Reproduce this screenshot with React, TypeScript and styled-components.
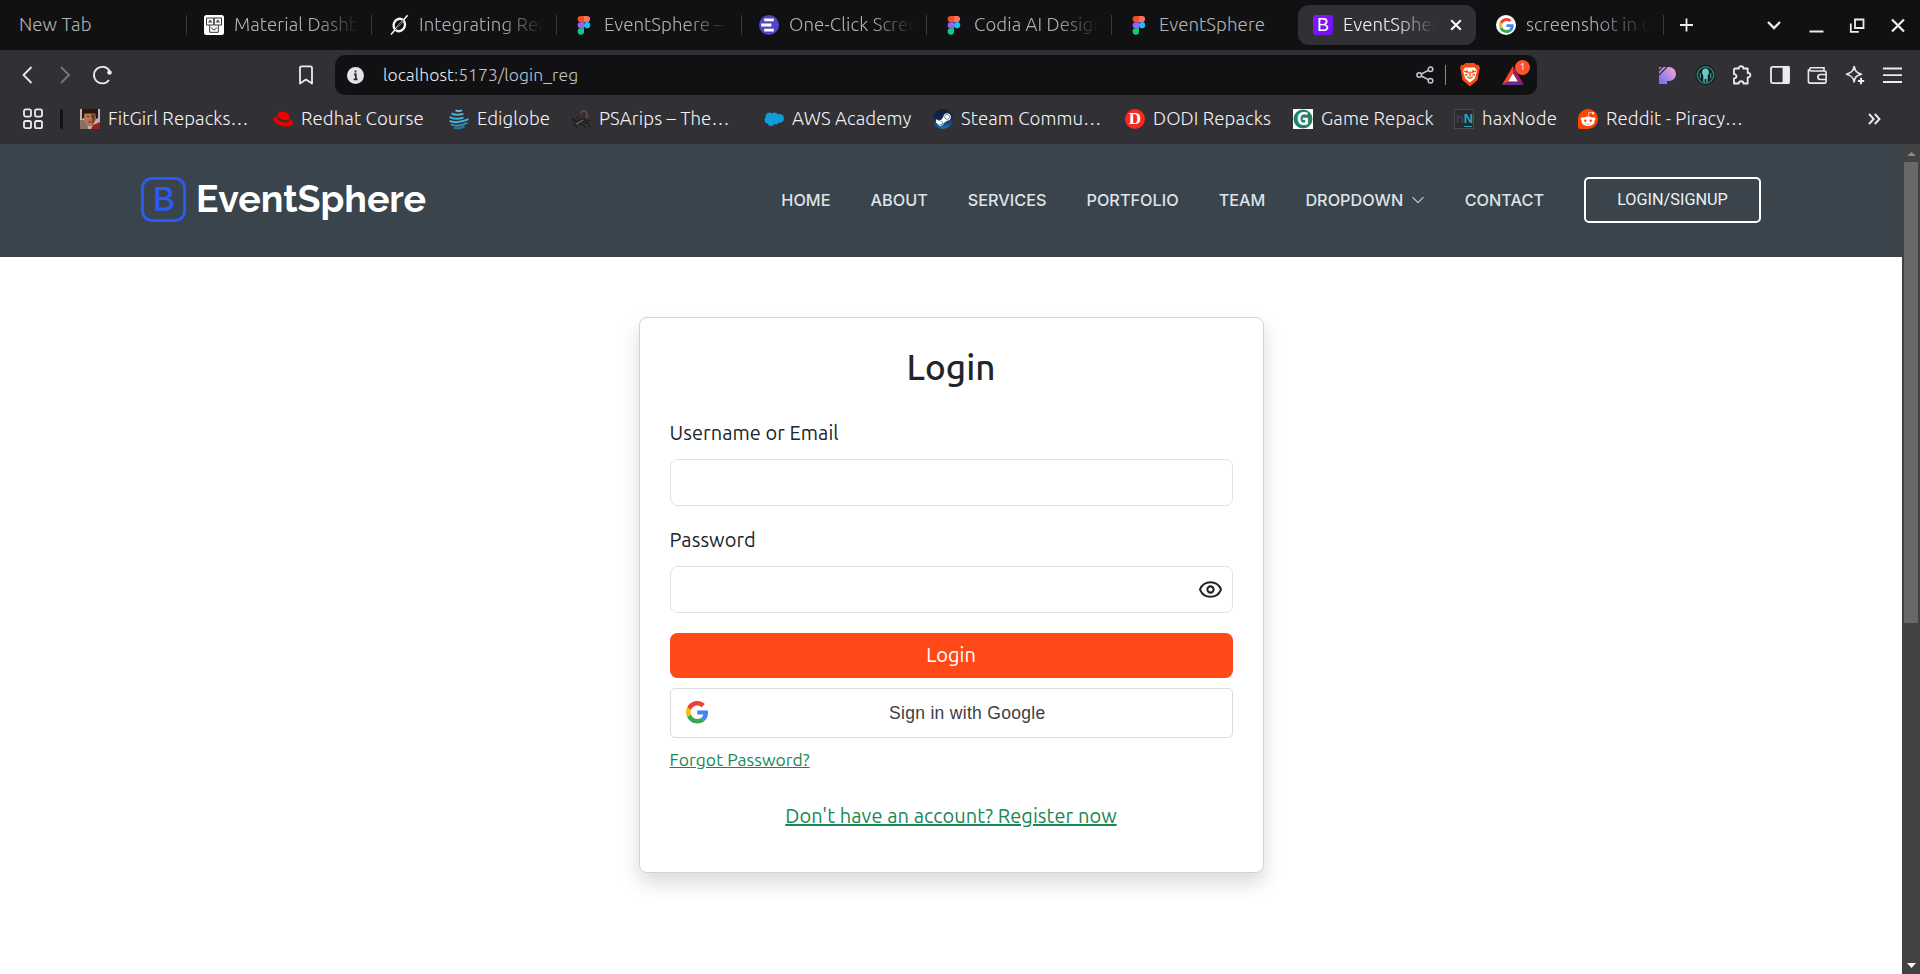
import React from 'react';
import styled, { createGlobalStyle, css } from 'styled-components';
import { Eye } from 'lucide-react';
import { FaRedhat, FaSteamSymbol, FaRedditAlien } from 'react-icons/fa';
import { BsBootstrap, BsChevronDown } from 'react-icons/bs';

const uiFont = "Ubuntu, 'Open Sans', 'Noto Sans', sans-serif";

const GlobalStyle = createGlobalStyle`
  *, *::before, *::after { box-sizing: border-box; }
  body { margin: 0; background: #fff; font-family: ${uiFont}; overflow: hidden; }
  svg { display: block; flex: none; }
`;

const Window = styled.div`
  display: flex;
  flex-direction: column;
  width: 1920px;
  height: 974px;
  overflow: hidden;
`;

/* ---------- browser chrome ---------- */

const TabStrip = styled.div`
  display: flex;
  align-items: center;
  height: 50px;
  flex: none;
  background: #111113;
  color: #f2f2f4;
`;

const Tab = styled.div<{ $width?: number; $active?: boolean; $plain?: boolean; $last?: boolean }>`
  display: flex;
  align-items: center;
  height: 20px;
  width: ${p => p.$width ?? 185}px;
  flex: none;
  padding-left: ${p => (p.$plain ? 19 : 17)}px;
  gap: 10px;
  color: #b3b3b6;
  border-right: 1px solid ${p => (p.$last ? 'transparent' : '#3b3b3e')};
  ${p => p.$active && css`
    height: 40px;
    width: 178px;
    margin: 0 3px 0 1px;
    padding-left: 15px;
    border: 0;
    border-radius: 11px;
    background: #313034;
    color: #f2f2f4;
  `}
`;

const TabTitle = styled.span<{ $short?: boolean }>`
  width: ${p => (p.$short ? 93 : 125)}px;
  overflow: hidden;
  white-space: nowrap;
  font-size: 18.67px;
  font-weight: 350;
  line-height: 26px;
  letter-spacing: 0.08px;
  mask-image: linear-gradient(to right, #000 ${p => (p.$short ? 55 : 66)}%, transparent 100%);
`;

const TabClose = styled.svg`
  margin-left: 4px;
`;

const LastTabTitle = styled(TabTitle)`
  mask-image: linear-gradient(to right, #000 55%, transparent 100%);
`;

const WholeTitle = styled(TabTitle)`
  mask-image: none;
`;

const WindowControls = styled.div`
  display: flex;
  align-items: center;
  margin-left: auto;
  padding-right: 12px;
  gap: 20px;
`;

const NewTabButton = styled.svg`
  margin-left: 12px;
`;

const Toolbar = styled.div`
  display: flex;
  align-items: center;
  height: 50px;
  flex: none;
  background: #313034;
  padding: 0 17px 0 20px;
`;

const NavIcons = styled.div`
  display: flex;
  align-items: center;
  width: 315px;
`;

const NavGap = styled.div`
  flex: 1;
`;

const AddressBar = styled.div`
  display: flex;
  align-items: center;
  width: 1202px;
  height: 40px;
  flex: none;
  padding: 0 10px 0 12px;
  border-radius: 10px;
  background: #111113;
`;

const Url = styled.span`
  margin: -2px 0 0 19px;
  font-size: 17.5px;
  font-weight: 350;
  letter-spacing: 0.08px;
  color: #c3c6cb;
  b { font-weight: 350; color: #e6e8ec; }
`;

const AddressActions = styled.div`
  display: flex;
  align-items: center;
  margin-left: auto;
`;

const AddressDivider = styled.div`
  width: 1px;
  height: 20px;
  margin: 0 14px 0 11px;
  background: #8a8a8e;
`;

const Rewards = styled.div`
  position: relative;
  margin-left: 21px;
  width: 26px;
  height: 22px;
`;

const RewardsBadge = styled.span`
  position: absolute;
  left: 14px;
  top: -4px;
  width: 15px;
  height: 15px;
  border-radius: 7.5px;
  background: #fb542b;
  color: #fff;
  font-size: 9px;
  line-height: 15px;
  text-align: center;
`;

const Extensions = styled.div`
  display: flex;
  align-items: center;
  margin-left: auto;
  gap: 15.3px;
`;

const BookmarksBar = styled.div`
  display: flex;
  align-items: center;
  height: 44px;
  flex: none;
  padding: 0 39px 6px 23px;
  background: #313034;
  color: #f2f2f4;
`;

const BarDivider = styled.div`
  width: 3px;
  height: 20px;
  margin: 0 17px;
  border-radius: 2px;
  background: #121214;
`;

const Bookmark = styled.div<{ $width: number }>`
  display: flex;
  align-items: center;
  gap: 8px;
  width: ${p => p.$width}px;
  flex: none;
  font-size: 18.67px;
  font-weight: 350;
  line-height: 26px;
  letter-spacing: 0.08px;
  white-space: nowrap;
`;

const MoreBookmarks = styled.svg`
  margin-left: auto;
`;

/* ---------- favicons ---------- */

const GoogleG = ({ size }: { size: number }) => (
  <svg width={size} height={size} viewBox="0 0 48 48">
    <path fill="#ea4335" d="M24 9.5c3.54 0 6.71 1.22 9.21 3.6l6.85-6.85C35.9 2.38 30.47 0 24 0 14.62 0 6.51 5.38 2.56 13.22l7.98 6.19C12.43 13.72 17.74 9.5 24 9.5z" />
    <path fill="#4285f4" d="M46.98 24.55c0-1.57-.15-3.09-.38-4.55H24v9.02h12.94c-.58 2.96-2.26 5.48-4.78 7.18l7.73 6c4.51-4.18 7.09-10.36 7.09-17.65z" />
    <path fill="#fbbc05" d="M10.53 28.59c-.48-1.45-.76-2.99-.76-4.59s.27-3.14.76-4.59l-7.98-6.19C.92 16.46 0 20.12 0 24c0 3.88.92 7.54 2.56 10.78l7.97-6.19z" />
    <path fill="#34a853" d="M24 48c6.48 0 11.93-2.13 15.89-5.81l-7.73-6c-2.15 1.45-4.92 2.3-8.16 2.3-6.26 0-11.57-4.22-13.47-9.91l-7.98 6.19C6.51 42.62 14.62 48 24 48z" />
  </svg>
);

const FigmaIcon = () => (
  <svg width="20" height="20" viewBox="0 0 20 20">
    <path d="M6.7 1H10v6.2H6.7a3.1 3.1 0 0 1 0-6.2z" fill="#f24e1e" />
    <path d="M10 1h3a3.1 3.1 0 0 1 0 6.2h-3z" fill="#ff7262" />
    <path d="M6.7 7.2H10v6.1H6.7a3.05 3.05 0 0 1 0-6.1z" fill="#a259ff" />
    <circle cx="13.1" cy="10.2" r="3.1" fill="#1abcfe" />
    <path d="M6.7 13.3H10v3.2a3.2 3.2 0 1 1-3.3-3.2z" fill="#0acf83" />
  </svg>
);

const MaterialIcon = () => (
  <svg width="20" height="20" viewBox="0 0 20 20" fill="none" stroke="#333" strokeWidth="1">
    <rect width="20" height="20" rx="2.5" fill="#fff" stroke="none" />
    <path d="M2.5 3h7.3v7H2.5zM10.2 3h7.3v7h-7.3zM5.7 10v7.3h8.6V10M7.8 12.5v1l2.2 1.5 2.2-1.5v-1" />
    <path d="M4.6 7.5 6.2 5l1.6 2.5M12.2 7.5 13.8 5l1.6 2.5M5.2 7h2M12.8 7h2" />
  </svg>
);

const SlashedOIcon = () => (
  <svg width="20" height="22" viewBox="0 0 20 22" fill="none" stroke="#f4f4f4">
    <ellipse cx="10.3" cy="11" rx="5.6" ry="6.3" strokeWidth="2.4" transform="rotate(24 10.3 11)" />
    <path d="M2 20.5 18.6 1.2" strokeWidth="1.5" />
    <path d="M6.5 15.8 14.2 6.2" strokeWidth="1" stroke="#111113" />
  </svg>
);

const StackIcon = () => (
  <svg width="20" height="20" viewBox="0 0 20 20">
    <circle cx="10" cy="10" r="10" fill="#5245c4" />
    <path d="M5.2 3.5h9.6v2.8H5.2zM2.2 8.6h10.2v2.8H2.2zM5.2 13.8h9.6v2.8H5.2z" fill="#fff" />
  </svg>
);

const BootstrapBadge = styled.span`
  width: 20px;
  height: 20px;
  flex: none;
  border-radius: 3px;
  background: linear-gradient(135deg, #8d17fb, #6a11f5);
  color: #fff;
  font: 500 18px/20px 'Liberation Sans', sans-serif;
  text-align: center;
`;

const RoundGoogle = styled.span`
  display: flex;
  align-items: center;
  justify-content: center;
  width: 20px;
  height: 20px;
  flex: none;
  border-radius: 50%;
  background: #fff;
`;

const PortraitIcon = () => (
  <svg width="20" height="20" viewBox="0 0 20 20">
    <rect width="20" height="20" fill="#b9b4b8" />
    <path d="M2 0h16v9l-2 1-1-5H5L4 9 2 10z" fill="#2b150f" />
    <path d="M4.5 4.5h10.7l.3 6-3 6.5H7.5L4 11z" fill="#b9764e" />
    <path d="M11 5h4.5v6l-3 5z" fill="#7c4429" />
    <path d="M7 7.5h2M11.5 7.5h2M8.5 13h3" stroke="#4b2317" />
    <path d="M0 11h4l4 7v2H0z" fill="#8b705f" />
    <path d="M13 16l7-3v7h-9z" fill="#a11d1d" />
  </svg>
);

const GlobeWavesIcon = () => (
  <svg width="20" height="22" viewBox="0 0 20 22" fill="none" stroke="#46b4d8" strokeWidth="2">
    <path d="M6.5 2.2c2 1.4 4 1 6.5.2" stroke="#65cbe8" strokeWidth="1.7" />
    <path d="M2.6 5.3c4 2.5 7.4 1.6 11.8.6" />
    <path d="M.6 9c5 2.9 9 2.2 14 .6" />
    <path d="M.6 12.8c6 2.7 12 1.6 19-1.6" />
    <path d="M1.8 16.4c5 2 11 1.4 16.6-1.5" stroke="#318fbf" />
    <path d="M5 19.8c3.6 1 7.5.5 10.5-1.4" stroke="#28749f" />
  </svg>
);

const ScorpionIcon = () => (
  <svg width="20" height="22" viewBox="0 0 20 22" fill="none" stroke="#1d1d1e" strokeLinecap="round">
    <path d="M11 12.5c4-1 6-4 4.6-7.5C14.5 2.3 10.5 2 10 4.7" stroke="#555" strokeWidth="1.6" />
    <path d="M10 4.7l.8 1.6M15.9 8l1.6.5" stroke="#7a3434" strokeWidth="1.3" />
    <path d="M4 16.5 13 11.5" strokeWidth="3.6" />
    <path d="M5 13 1.5 11l-.5 2.5M9 11 6 9M12 14l5 1 2 4M9 16l4 1.5 2 3M5 17.5l1 3M15 12l4 .5" strokeWidth="1.2" />
    <path d="M5 16.3 12 12.2" stroke="#666" strokeWidth="1.4" />
  </svg>
);

const CloudIcon = () => (
  <svg width="20" height="20" viewBox="0 0 20 20">
    <path d="M8.3 4.6a3.6 3.6 0 0 1 5.6.8 4.4 4.4 0 0 1 6.1 4 4.4 4.4 0 0 1-5.3 4.3 3.2 3.2 0 0 1-4.2 1.3 3.7 3.7 0 0 1-6.8-.3A3.5 3.5 0 0 1 1.7 8.6 4 4 0 0 1 8.3 4.6z" fill="#0d9ddb" />
  </svg>
);

const SteamBadge = styled.span`
  display: flex;
  align-items: center;
  justify-content: center;
  width: 20px;
  height: 20px;
  flex: none;
  border-radius: 50%;
  background: linear-gradient(#101b3d, #11254f 45%, #1b7ab4);
  color: #fff;
`;

const LetterBadge = styled.span<{ $bg: string; $round?: boolean }>`
  width: 20px;
  height: 20px;
  flex: none;
  border-radius: ${p => (p.$round ? '50%' : '0')};
  background: ${p => p.$bg};
  color: #fff;
  font: 700 17px/20px ${p => (p.$round ? "'Liberation Serif', serif" : "'Open Sans', sans-serif")};
  text-align: center;
`;

const HaxBadge = styled.span`
  display: flex;
  justify-content: center;
  gap: 1px;
  width: 20px;
  height: 20px;
  flex: none;
  border: 1px solid #47494c;
  background: #2a2a2d;
  color: #3e4043;
  font: 700 13px/17px 'Liberation Sans Narrow', 'Liberation Sans', sans-serif;
  letter-spacing: -1px;
  b { color: #25a9bd; border-bottom: 1px solid #25a9bd; height: 17px; }
`;

const RedditBadge = styled.span`
  display: flex;
  align-items: center;
  justify-content: center;
  width: 20px;
  height: 20px;
  flex: none;
  border-radius: 50% 50% 50% 2px;
  background: #ff4500;
  color: #fff;
`;

/* ---------- site ---------- */

const Viewport = styled.div`
  display: flex;
  flex: 1;
  min-height: 0;
`;

const Site = styled.div`
  flex: 1;
  background: #fff;
`;

const Header = styled.header`
  display: flex;
  align-items: center;
  justify-content: space-between;
  height: 113px;
  padding: 0 141px 2px;
  background: #3a444c;
`;

const Brand = styled.div`
  display: flex;
  align-items: center;
  gap: 10px;
  color: #2a5bf8;
`;

const BrandName = styled.h1`
  margin: 0;
  font: 700 37.5px/45px Raleway, Lato, sans-serif;
  color: #fff;
`;

const NavMenu = styled.nav`
  display: flex;
  align-items: center;
  gap: 40px;
  font: 500 16.25px/24px Inter, sans-serif;
  color: #dfe3e7;
`;

const NavLink = styled.span`
  display: flex;
  align-items: center;
  gap: 7.5px;
`;

const SignupButton = styled.button`
  width: 177px;
  height: 46px;
  padding: 0;
  border: 2px solid #fff;
  border-radius: 5px;
  background: none;
  color: #f0f1f2;
  font: 400 16.25px/24px Roboto, sans-serif;
`;

const Card = styled.section`
  display: flex;
  flex-direction: column;
  width: 625px;
  height: 556px;
  margin: 60px auto 0;
  padding: 28px 30px 29px;
  border: 1px solid #d0d3d5;
  border-radius: 8px;
  background: #fff;
  box-shadow: 0 10px 20px rgba(0, 0, 0, 0.15);
  color: #212529;
`;

const Title = styled.h2`
  margin: 0;
  font-size: 35px;
  font-weight: 490;
  line-height: 42px;
  letter-spacing: 0.05px;
  text-align: center;
`;

const Fields = styled.div`
  margin: 30px 0 1px;
`;

const Field = styled.label`
  display: flex;
  flex-direction: column;
  gap: 11px;
  height: 88px;
  margin-bottom: 19px;
  font-size: 20px;
  font-weight: 370;
  line-height: 30px;
  letter-spacing: 0.05px;
`;

const InputBox = styled.span`
  display: flex;
  align-items: center;
  justify-content: flex-end;
  height: 47px;
  padding-right: 9px;
  border: 1px solid #dee2e6;
  border-radius: 7.5px;
`;

const LoginButton = styled.button`
  height: 45px;
  flex: none;
  padding: 0 0 2px;
  border: 0;
  border-radius: 7.5px;
  background: #ff4a17;
  color: #fff;
  font: 370 20px/30px ${uiFont};
`;

const GoogleButton = styled.button`
  display: flex;
  align-items: center;
  height: 50px;
  flex: none;
  margin-top: 10px;
  padding: 0 14px 1px 15px;
  border: 1px solid #dadce0;
  border-radius: 5px;
  background: #fff;
  color: #3c4043;
  font: 400 17.5px/20px 'Liberation Sans', Arial, sans-serif;
  letter-spacing: 0.3px;
  span { flex: 1; padding-left: 9px; text-align: center; }
`;

const ForgotLink = styled.a`
  align-self: flex-start;
  margin-top: 9px;
  font-size: 17.5px;
  font-weight: 370;
  line-height: 26px;
  letter-spacing: 0.06px;
  color: #198754;
  text-decoration: underline;
`;

const RegisterLink = styled.a`
  align-self: center;
  margin-top: 28px;
  font-size: 20px;
  font-weight: 370;
  line-height: 30px;
  letter-spacing: 0.07px;
  color: #198754;
  text-decoration: underline;
  text-decoration-thickness: 2px;
`;

const ScrollTrack = styled.div`
  display: flex;
  flex-direction: column;
  align-items: center;
  width: 18px;
  padding: 8px 0 6px;
  background: #424242;
`;

const ScrollThumb = styled.div`
  width: 14px;
  height: 461px;
  margin: 6px 0 auto;
  background: #686868;
`;

const tabs = [
  { title: 'Material Dashb', icon: <MaterialIcon /> },
  { title: 'Integrating Rea', icon: <SlashedOIcon /> },
  { title: 'EventSphere –', icon: <FigmaIcon /> },
  { title: 'One-Click Scree', icon: <StackIcon /> },
  { title: 'Codia AI Design', icon: <FigmaIcon /> },
];

const bookmarks = [
  { title: 'FitGirl Repacks…', width: 193, icon: <PortraitIcon /> },
  { title: 'Redhat Course', width: 176, icon: <FaRedhat size={20} color="#ee0000" /> },
  { title: 'Ediglobe', width: 122, icon: <GlobeWavesIcon /> },
  { title: 'PSArips – The…', width: 193, icon: <ScorpionIcon /> },
  { title: 'AWS Academy', width: 169, icon: <CloudIcon /> },
  { title: 'Steam Commu…', width: 192, icon: <SteamBadge><FaSteamSymbol size={17} /></SteamBadge> },
  { title: 'DODI Repacks', width: 168, icon: <LetterBadge $bg="#f9291f" $round>D</LetterBadge> },
  {
    title: 'Game Repack', width: 161,
    icon: <LetterBadge $bg="radial-gradient(circle, #238069 9px, #fff 9.8px)">G</LetterBadge>,
  },
  { title: 'haxNode', width: 124, icon: <HaxBadge>h<b>N</b></HaxBadge> },
  { title: 'Reddit - Piracy…', width: 170, icon: <RedditBadge><FaRedditAlien size={16} /></RedditBadge> },
];

const line = { fill: 'none', stroke: '#ececef', strokeWidth: 1.8 } as const;

export default function App() {
  return (
    <Window>
      <GlobalStyle />
      <TabStrip>
        <Tab $width={187} $plain>
          <WholeTitle>New Tab</WholeTitle>
        </Tab>
        {tabs.map(t => (
          <Tab key={t.title}>
            {t.icon}
            <TabTitle>{t.title}</TabTitle>
          </Tab>
        ))}
        <Tab $last>
          <FigmaIcon />
          <WholeTitle>EventSphere</WholeTitle>
        </Tab>
        <Tab $active>
          <BootstrapBadge>B</BootstrapBadge>
          <TabTitle $short>EventSphere</TabTitle>
          <TabClose width="12" height="12" viewBox="0 0 12 12" stroke="#fff" strokeWidth="2">
            <path d="M1.2 1.2l9.6 9.6M10.8 1.2l-9.6 9.6" />
          </TabClose>
        </Tab>
        <Tab>
          <RoundGoogle><GoogleG size={15} /></RoundGoogle>
          <LastTabTitle>screenshot in u</LastTabTitle>
        </Tab>
        <NewTabButton width="20" height="20" viewBox="0 0 20 20" {...line}>
          <path d="M10.5 3.5v13M4 10h13" />
        </NewTabButton>
        <WindowControls>
          <svg width="20" height="20" viewBox="0 0 20 20" {...line} strokeWidth="2.4">
            <path d="M4 7l6 6 6-6" />
          </svg>
          <svg width="24" height="20" viewBox="0 0 24 20" {...line} strokeWidth="2">
            <path d="M5.5 16.5h14" />
          </svg>
          <svg width="20" height="20" viewBox="0 0 20 20" {...line}>
            <path d="M7 4.5h8.5V13H7zM2.8 8.5v8.3h8" />
          </svg>
          <svg width="20" height="20" viewBox="0 0 20 20" {...line} strokeWidth="2.2">
            <path d="M4 4.5l12 12M16 4.5l-12 12" />
          </svg>
        </WindowControls>
      </TabStrip>

      <Toolbar>
        <NavIcons>
          <svg width="14" height="18" viewBox="0 0 14 18" {...line}>
            <path d="M11.5 1 3.5 9l8 8" />
          </svg>
          <svg width="42" height="18" viewBox="0 0 42 18" {...line} stroke="#77767b">
            <path d="M27 1l8 8-8 8" />
          </svg>
          <svg width="40" height="20" viewBox="0 0 40 20" {...line}>
            <path d="M33.5 6A8.3 8.3 0 1 0 33 15" />
            <circle cx="33.5" cy="7.5" r="2.3" fill="#ececef" stroke="none" />
          </svg>
          <NavGap />
          <svg width="36" height="20" viewBox="0 0 36 20" {...line} strokeLinejoin="round">
            <path d="M1 3a1.7 1.7 0 0 1 1.7-1.7h8.6A1.7 1.7 0 0 1 13 3v15.5l-6-4-6 4z" />
          </svg>
        </NavIcons>
        <AddressBar>
          <svg width="17" height="17" viewBox="0 0 17 17">
            <circle cx="8.5" cy="8.5" r="8.5" fill="#e3e3e8" />
            <path d="M7 7.3h1.8v5M6.6 12.4h4M8.5 3.5v2" stroke="#29292c" strokeWidth="1.7" fill="none" />
          </svg>
          <Url><b>localhost</b>:5173/login_reg</Url>
          <AddressActions>
            <svg width="18" height="18" viewBox="0 0 18 18" {...line} strokeWidth="1.5" stroke="#c8c8cc">
              <circle cx="3.2" cy="9" r="2.3" />
              <circle cx="14.5" cy="3.3" r="2.3" />
              <circle cx="14.5" cy="14.7" r="2.3" />
              <path d="M5.3 8l7-3.7M5.3 10l7 3.7" />
            </svg>
            <AddressDivider />
            <svg width="20" height="24" viewBox="0 0 20 24">
              <path d="M5.5 0h9l2 2 2-.2L20 5l-.8 2.5L17.5 17 10 23.5 2.5 17 .8 7.5 0 5l1.5-3.2 2 .2z" fill="#fb4c0b" />
              <path d="M5 4.5h10l2 3.5-2.2 7.5L10 19.5l-4.8-4L3 8z" fill="#fff" />
              <path d="M3.8 8.2 8 9.4 6.5 7M16.2 8.2 12 9.4 13.5 7M10 8.5v5M7.2 13.8 10 15.3l2.8-1.5M5 12l2.5-.5M15 12l-2.5-.5" stroke="#fb4c0b" strokeWidth="1.3" fill="none" />
            </svg>
            <Rewards>
              <svg width="24" height="22" viewBox="0 0 24 22">
                <path d="M12 2v8.5L7.5 17.5 1 21z" fill="#ff4724" />
                <path d="M12 2l11 19-6.5-3.5L12 10.5z" fill="#9e1f63" />
                <path d="M1 21l6.5-3.5h9L23 21z" fill="#662d91" />
                <path d="M12 9.5l4.8 8H7.2z" fill="#fff" />
              </svg>
              <RewardsBadge>1</RewardsBadge>
            </Rewards>
          </AddressActions>
        </AddressBar>
        <Extensions>
          <svg width="22" height="20" viewBox="0 0 22 20">
            <defs>
              <linearGradient id="p" x1="1" y1="0" x2="0" y2="1">
                <stop offset="0.1" stopColor="#f6a3cf" />
                <stop offset="1" stopColor="#6c6cff" />
              </linearGradient>
            </defs>
            <path d="M2 2h10a7 7 0 0 1 0 14h-2v3H2z" fill="url(#p)" />
            <path d="M1 6.5 6.5 1M1 11 11 1" stroke="#313034" strokeWidth="1.3" />
          </svg>
          <svg width="22" height="20" viewBox="0 0 22 20">
            <circle cx="10.5" cy="10" r="10" fill="#14191b" />
            <circle cx="10.5" cy="10" r="8.2" fill="none" stroke="#2c7f7a" strokeWidth="1.5" />
            <path d="M10.5 3.5c2.4 0 3.8 2 3.5 4.3-.2 1.7-1.5 2.2-1.3 3.8v5l-1.3 1.5v-4H9.600v4l-1.300-1.500v-5c.2-1.600-1.100-2.100-1.300-3.800C6.700 5.500 8.100 3.500 10.500 3.500z" fill="#62cdc4" />
            <path d="M5.300 8v5.500M15.700 8v5.500" stroke="#4aa59d" strokeWidth="1.100" />
          </svg>
          <svg width="22" height="20" viewBox="0 0 22 20" {...line} strokeLinejoin="round">
            <path d="M3.200 3.500h3.600c-.5-3 5-3 4.600 0h4.300V8c3.600-.6 3.600 4.700 0 4.300v6.200h-4.200c0-3-4.800-3-4.800 0H2v-5c3.300 0 3.300-4.300 0-4.300V4.700A1.200 1.200 0 0 1 3.200 3.500z" />
          </svg>
          <svg width="22" height="20" viewBox="0 0 22 20" {...line}>
            <rect x="2" y="1.900" width="18" height="16.200" rx="1.500" />
            <path d="M14.500 2h5v16h-5z" fill="#ececef" />
          </svg>
          <svg width="22" height="20" viewBox="0 0 22 20" {...line} strokeWidth="1.600">
            <path d="M18 6V2.800H4.500a2 2 0 0 0 0 3.200M2.400 4.300v12a1.800 1.800 0 0 0 1.800 1.800h14.600a1.300 1.300 0 0 0 1.300-1.300V7.300A1.300 1.300 0 0 0 18.800 6H4.500M20 9.500h-5.600a2.500 2.500 0 0 0 0 5H20" />
          </svg>
          <svg width="22" height="20" viewBox="0 0 22 20" {...line} strokeWidth="1.600" strokeLinejoin="round">
            <path d="M10.200 1.500c.8 4.500 2.200 6.300 7.300 7.700-3 .8-5 1.700-6 3.300-.7 1-1 2.200-1.300 4.500-1-4.700-2.800-6.600-7.700-7.800 5-1.400 6.700-3.200 7.700-7.700z" />
            <path d="M17 12.800v6.400M13.800 16h6.400" strokeWidth="2" />
          </svg>
          <svg width="22" height="20" viewBox="0 0 22 20" {...line}>
            <path d="M2 3.500h19M2 10.200h19M2 17h19" />
          </svg>
        </Extensions>
      </Toolbar>

      <BookmarksBar>
        <svg width="20" height="22" viewBox="0 0 20 22" {...line}>
          <rect x="1" y="1.400" width="7" height="7.200" rx="1.800" />
          <rect x="12" y="1.400" width="7" height="7.200" rx="1.800" />
          <rect x="1" y="13" width="7" height="7.200" rx="1.800" />
          <rect x="12" y="13" width="7" height="7.200" rx="1.800" />
        </svg>
        <BarDivider />
        {bookmarks.map(b => (
          <Bookmark key={b.title} $width={b.width}>
            {b.icon}
            <span>{b.title}</span>
          </Bookmark>
        ))}
        <MoreBookmarks width="13" height="12" viewBox="0 0 13 12" {...line} strokeWidth="1.900">
          <path d="M1 1l4.700 5L1 11M6.800 1l4.700 5-4.700 5" />
        </MoreBookmarks>
      </BookmarksBar>

      <Viewport>
        <Site>
          <Header>
            <Brand>
              <BsBootstrap size={45} />
              <BrandName>EventSphere</BrandName>
            </Brand>
            <NavMenu>
              <NavLink>HOME</NavLink>
              <NavLink>ABOUT</NavLink>
              <NavLink>SERVICES</NavLink>
              <NavLink>PORTFOLIO</NavLink>
              <NavLink>TEAM</NavLink>
              <NavLink>DROPDOWN <BsChevronDown size={14} /></NavLink>
              <NavLink>CONTACT</NavLink>
              <SignupButton>LOGIN/SIGNUP</SignupButton>
            </NavMenu>
          </Header>
          <Card>
            <Title>Login</Title>
            <Fields>
              <Field>
                Username or Email
                <InputBox />
              </Field>
              <Field>
                Password
                <InputBox><Eye size={25} strokeWidth={2} /></InputBox>
              </Field>
            </Fields>
            <LoginButton>Login</LoginButton>
            <GoogleButton>
              <GoogleG size={22.5} />
              <span>Sign in with Google</span>
            </GoogleButton>
            <ForgotLink>Forgot Password?</ForgotLink>
            <RegisterLink>Don't have an account? Register now</RegisterLink>
          </Card>
        </Site>
        <ScrollTrack>
          <svg width="9" height="4" viewBox="0 0 9 4"><path d="M0 4 4.500 0 9 4z" fill="#8b8b8b" /></svg>
          <ScrollThumb />
          <svg width="9" height="5" viewBox="0 0 9 5"><path d="M0 0h9L4.500 5z" fill="#fff" /></svg>
        </ScrollTrack>
      </Viewport>
    </Window>
  );
}
